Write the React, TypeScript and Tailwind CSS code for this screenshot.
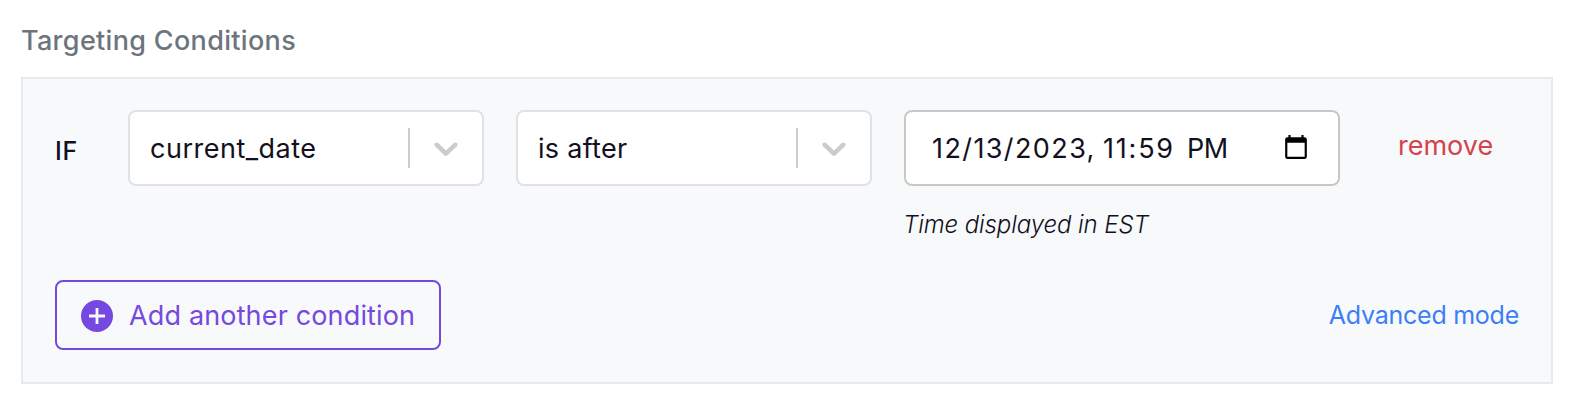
function Select({ value, spacing }: { value: string; spacing: string }) {
  return (
    <div className="flex h-[76px] w-[356px] items-center rounded-lg border-2 border-[#dee2e6] bg-white pr-4 pl-5">
      <span className={`flex-1 pt-0.5 text-[27px] leading-10 ${spacing}`}>{value}</span>
      <span className="h-10 w-0.5 bg-[#cccccc]" />
      <svg viewBox="0 0 20 20" className="ml-4 size-10 fill-[#cccccc]">
        <path d="M4.516 7.548c0.436-0.446 1.043-0.481 1.576 0l3.908 3.747 3.908-3.747c0.533-0.481 1.141-0.446 1.574 0 0.436 0.445 0.408 1.197 0 1.615-0.406 0.418-4.695 4.502-4.695 4.502-0.217 0.223-0.502 0.335-0.787 0.335s-0.57-0.112-0.789-0.335c0 0-4.287-4.084-4.695-4.502s-0.436-1.17 0-1.615z" />
      </svg>
    </div>
  );
}

function DateInput() {
  return (
    <div className="flex h-[76px] w-[436px] items-center justify-between rounded-lg border-2 border-[#c8c8c8] bg-white pr-[29px] pl-[26px]">
      <span className="flex pt-0.5 text-[27px] leading-10 whitespace-nowrap">
        <span className="w-[171px] tracking-[1.4px]">12/13/2023,</span>
        <span className="w-[84px] tracking-[1.8px]">11:59</span>
        <span className="tracking-[-0.5px]">PM</span>
      </span>
      <svg viewBox="0 0 24 24" className="-mt-0.5 size-[26px] fill-black">
        <path d="M20 3h-1V1h-2v2H7V1H5v2H4c-1.1 0-2 .9-2 2v16c0 1.1.9 2 2 2h16c1.1 0 2-.9 2-2V5c0-1.1-.9-2-2-2zm0 18H4V8h16v13z" />
      </svg>
    </div>
  );
}

export default function App() {
  return (
    <div className="h-[410px] bg-white pt-[21px] pr-[27px] pl-[21px] font-['Inter',sans-serif] text-[#121020]">
      <h2 className="text-[27px] leading-10 font-medium tracking-[0.32px] text-[#6c757d]">Targeting Conditions</h2>
      <section className="mt-4 flex h-[307px] flex-col justify-between border-2 border-[#e8e9ec] bg-[#f8f9fb] pt-[31px] pr-8 pb-8 pl-8">
        <div className="flex items-start">
          <span className="w-[73px] pt-[21px] text-[25px] leading-10 font-medium tracking-[0.8px]">IF</span>
          <Select value="current_date" spacing="tracking-[0.5px]" />
          <div className="ml-8">
            <Select value="is after" spacing="tracking-[0.3px]" />
          </div>
          <div className="ml-8">
            <DateInput />
            <p className="-ml-px mt-[19px] text-[24px] leading-10 font-light tracking-[-0.1px] italic">Time displayed in EST</p>
          </div>
          <button className="mt-4 ml-[58px] text-[27px] leading-10 text-[#d2434b]">remove</button>
        </div>
        <div className="flex items-center justify-between">
          <button className="flex h-[70px] w-[386px] items-center rounded-lg border-2 border-[#7549e0] pt-0.5 pl-6 text-[27px] leading-10 tracking-[0.15px] whitespace-nowrap text-[#7549e0]">
            <svg viewBox="0 0 24 24" className="mr-4 size-8 shrink-0">
              <circle cx="12" cy="12" r="12" fill="#7549e0" />
              <path d="M12 6v12M6 12h12" stroke="#f8f9fb" strokeWidth="2.1" />
            </svg>
            Add another condition
          </button>
          <a className="text-[25px] leading-10 tracking-[-0.25px] text-[#3b7ff6]">Advanced mode</a>
        </div>
      </section>
    </div>
  );
}
